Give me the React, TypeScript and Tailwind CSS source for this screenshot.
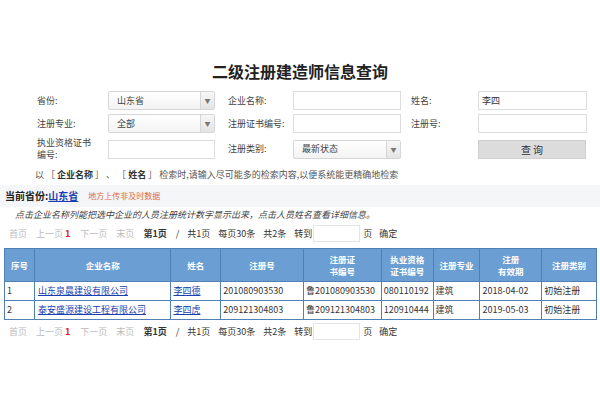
import React from "react";

const F = { fontFamily: '"Noto Sans CJK SC", "Liberation Sans", sans-serif' };

function Sel({ w, text }: { w: string; text: string }) {
  return (
    <div className={`${w} h-[19px] flex items-center border border-[#d6d6d6] rounded-[2px] bg-gradient-to-b from-white to-[#f3f3f3]`}>
      <span className="flex-1 pl-[8px] text-[9px] text-[#444]">{text}</span>
      <span className="w-[14px] h-full border-l border-[#d6d6d6] bg-gradient-to-b from-[#f7f7f7] to-[#e4e4e4] flex items-center justify-center text-[6px] text-[#777]">▼</span>
    </div>
  );
}

function Inp({ w, text }: { w: string; text?: string }) {
  return (
    <div className={`${w} h-[19px] flex items-center border border-[#dcdcdc] bg-white pl-[3px] text-[9px] text-[#333]`}>{text}</div>
  );
}

function Pager() {
  return (
    <div className="flex items-center text-[9px] h-[18px] pl-[9px]">
      <span className="text-[#bbb]">首页</span>
      <span className="text-[#bbb] ml-[9px]">上一页</span>
      <span className="text-[#e02020] ml-[2px] font-bold">1</span>
      <span className="text-[#bbb] ml-[10px]">下一页</span>
      <span className="text-[#bbb] ml-[9px]">末页</span>
      <span className="text-[#333] ml-[9px] font-bold">第1页</span>
      <span className="text-[#333] ml-[9px]">/</span>
      <span className="text-[#333] ml-[8px]">共1页</span>
      <span className="text-[#333] ml-[8px]">每页30条</span>
      <span className="text-[#333] ml-[8px]">共2条</span>
      <span className="text-[#333] ml-[8px]">转到</span>
      <div className="w-[47px] h-[17px] border border-[#e4e4e4] bg-white ml-[1px]"></div>
      <span className="text-[#333] ml-[3px]">页</span>
      <span className="text-[#333] ml-[7px]">确定</span>
    </div>
  );
}

const cols = ["w-[29px]", "w-[137px]", "w-[50px]", "w-[83px]", "w-[78px]", "w-[52px]", "w-[47px]", "w-[62px]", "w-[55px]"];

const rows = [
  ["1", "山东泉晨建设有限公司", "李四德", "201080903530", "鲁201080903530", "080110192", "建筑", "2018-04-02", "初始注册"],
  ["2", "泰安盛源建设工程有限公司", "李四虎", "209121304803", "鲁209121304803", "120910444", "建筑", "2019-05-03", "初始注册"],
];

export default function App() {
  const heads: React.ReactNode[] = [
    "序号",
    "企业名称",
    "姓名",
    "注册号",
    <>注册证<br />书编号</>,
    <>执业资格<br />证书编号</>,
    "注册专业",
    <>注册<br />有效期</>,
    "注册类别",
  ];
  return (
    <div style={F} className="w-[600px] h-[400px] bg-white text-[#333] overflow-hidden">
      <div className="pt-[60px] text-center text-[16px] font-bold text-[#222] leading-[22px]">二级注册建造师信息查询</div>
      <div className="mt-[9px] pl-[37px] flex flex-col gap-[4px] text-[9px] text-[#444]">
        <div className="flex items-center">
          <span className="w-[71px]">省份:</span>
          <Sel w="w-[107px]" text="山东省" />
          <span className="w-[65px] ml-[13px]">企业名称:</span>
          <Inp w="w-[108px]" />
          <span className="w-[67px] ml-[10px]">姓名:</span>
          <Inp w="w-[109px]" text="李四" />
        </div>
        <div className="flex items-center">
          <span className="w-[71px]">注册专业:</span>
          <Sel w="w-[107px]" text="全部" />
          <span className="w-[65px] ml-[13px]">注册证书编号:</span>
          <Inp w="w-[108px]" />
          <span className="w-[67px] ml-[10px]">注册号:</span>
          <Inp w="w-[109px]" />
        </div>
        <div className="flex items-center">
          <span className="w-[71px] leading-[12px]">执业资格证书<br />编号:</span>
          <Inp w="w-[107px]" />
          <span className="w-[65px] ml-[13px]">注册类别:</span>
          <Sel w="w-[108px]" text="最新状态" />
          <span className="w-[67px] ml-[10px]"></span>
          <div className="w-[108px] h-[19px] bg-[#dcdcdc] border border-[#d0d0d0] flex items-center justify-center text-[10px] text-[#333]">查 询</div>
        </div>
      </div>
      <div className="mt-[7px] pl-[35px] text-[9px] text-[#555] whitespace-nowrap">
        以 ［ <b className="text-[#333]">企业名称</b> ］ 、 ［ <b className="text-[#333]">姓名</b> ］ 检索时,请输入尽可能多的检索内容,以便系统能更精确地检索
      </div>
      <div className="mt-[3px] h-[22px] bg-[#f4f6f8] flex items-center pl-[5px]">
        <span className="text-[10px] font-bold text-[#222]">当前省份:</span>
        <span className="text-[10px] font-bold text-[#1a3fb0] underline">山东省</span>
        <span className="text-[8px] text-[#e06a45] ml-[10px]">地方上传非及时数据</span>
      </div>
      <div className="mt-[1px] pl-[15px] text-[9px] text-[#444] italic h-[14px] leading-[14px] whitespace-nowrap">点击企业名称列能把选中企业的人员注册统计数字显示出来，点击人员姓名查看详细信息。</div>
      <div className="mt-[3px]"><Pager /></div>
      <div className="mt-[5px] ml-[4px] w-[593px] border border-[#4f81b8]">
        <div className="flex bg-[#6b9fd3] h-[32px] text-white text-[8.5px] font-bold">
          {heads.map((h, i) => (
            <div key={i} className={`${cols[i]} ${i > 0 ? "border-l border-[#4f81b8]" : ""} flex items-center justify-center text-center leading-[12px]`}>{h}</div>
          ))}
        </div>
        {rows.map((r, ri) => (
          <div key={ri} className="flex h-[19px] border-t border-[#4f81b8] text-[9px] text-[#333] bg-white">
            {r.map((c, i) => (
              <div key={i} className={`${cols[i]} ${i > 0 ? "border-l border-[#4f81b8]" : ""} flex items-center ${i === 1 ? "pl-[3px]" : "pl-[2px]"} whitespace-nowrap overflow-hidden`}>
                {i === 1 || i === 2 ? <span className="text-[#1a3fb0] underline">{c}</span> : c}
              </div>
            ))}
          </div>
        ))}
      </div>
      <div className="mt-[3px]"><Pager /></div>
    </div>
  );
}
